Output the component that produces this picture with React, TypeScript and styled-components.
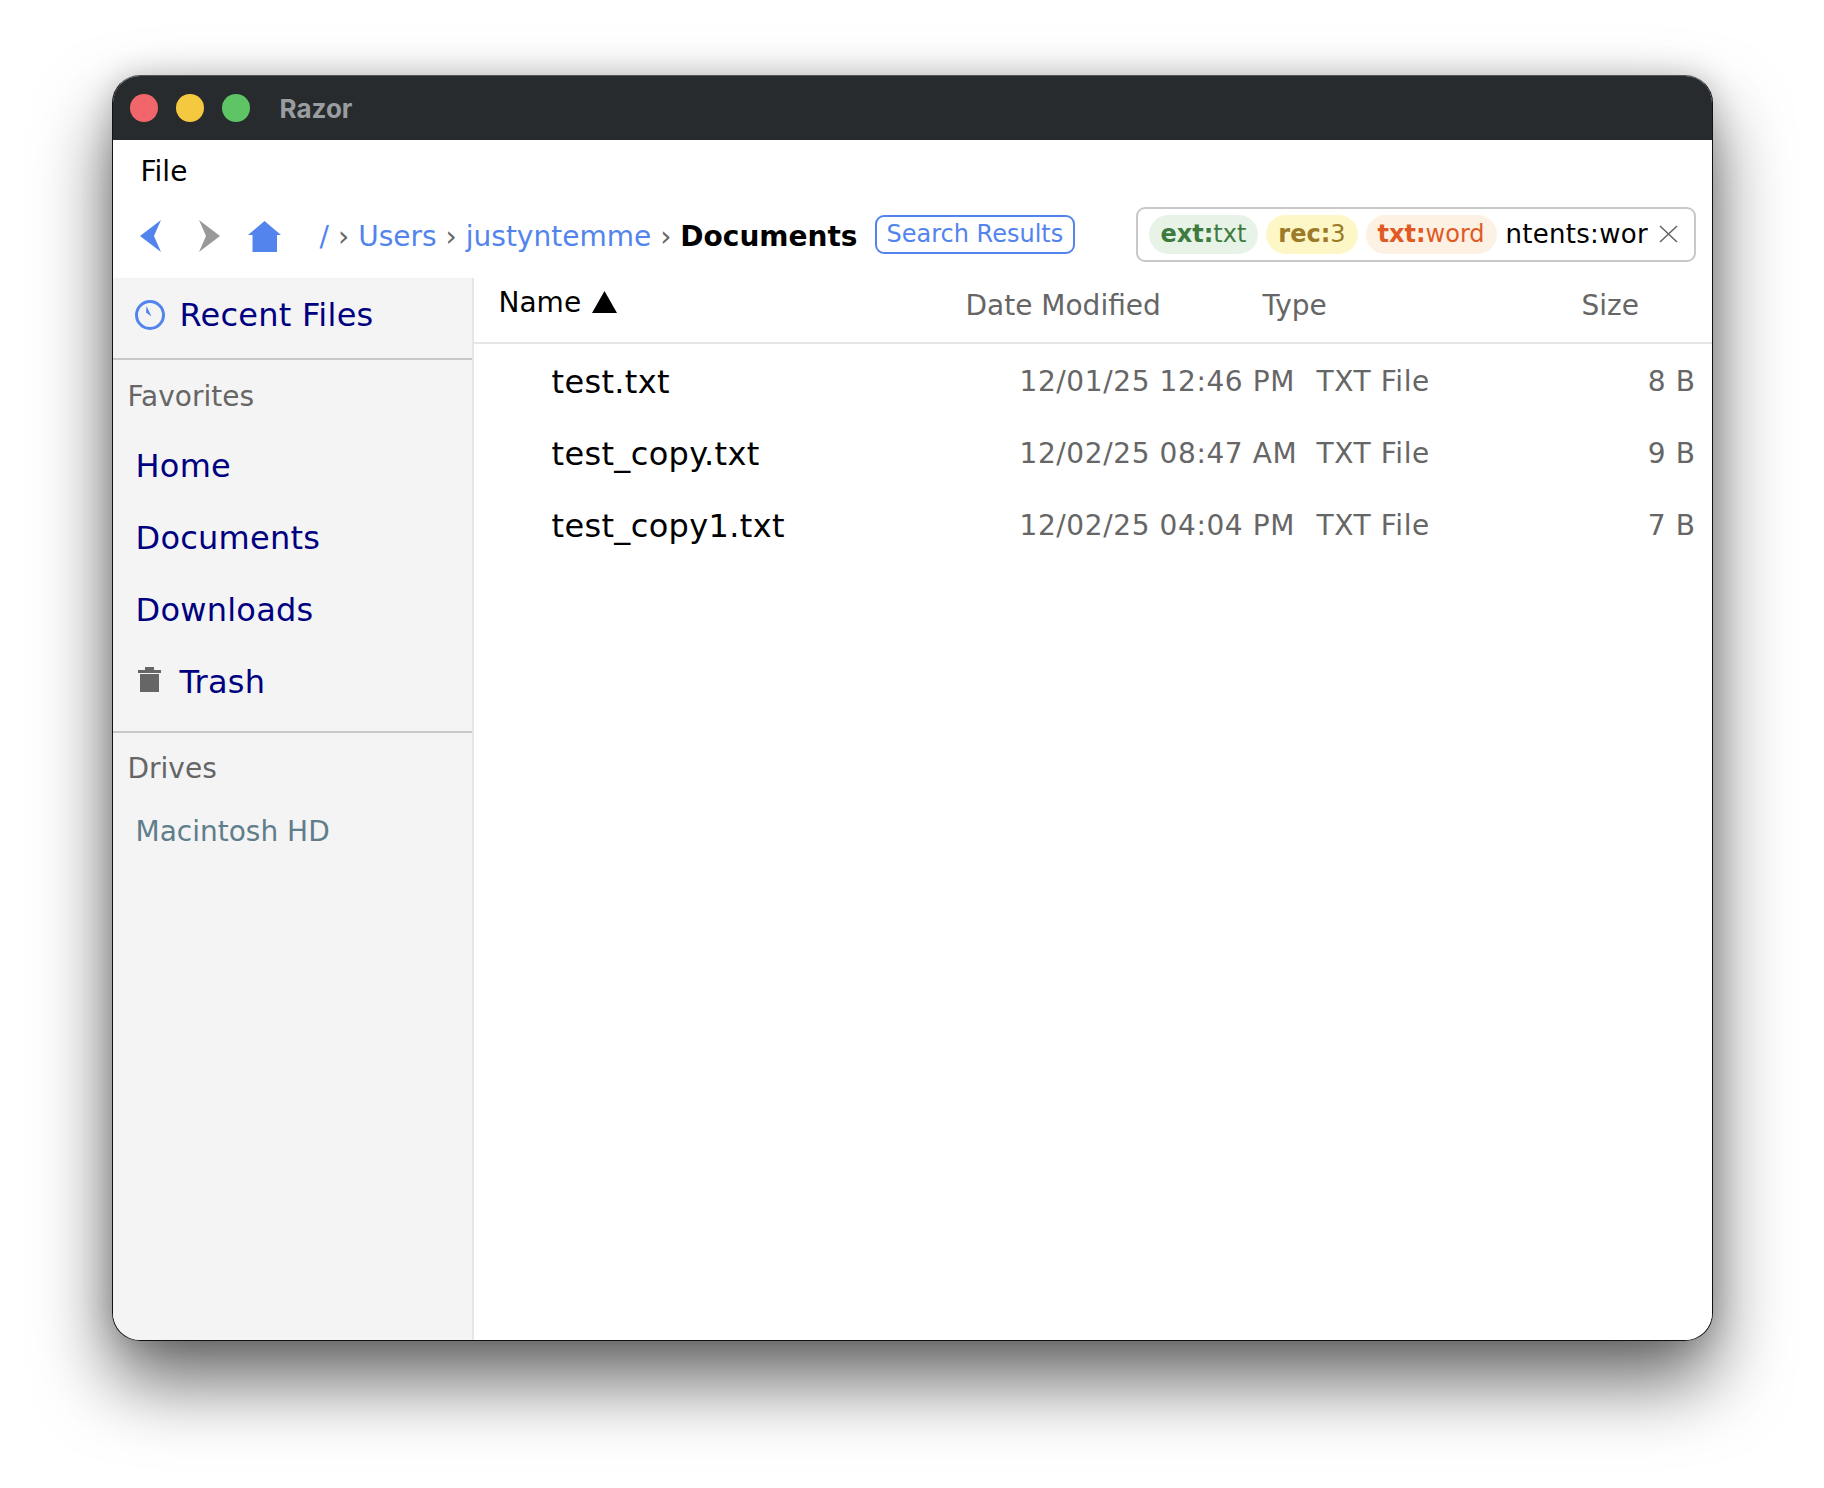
import React from 'react';
import styled, { createGlobalStyle } from 'styled-components';

const GlobalStyle = createGlobalStyle`
  html, body {
    margin: 0;
    padding: 0;
    background: #fff;
  }
  * {
    box-sizing: border-box;
  }
`;

const files = [
  { name: 'test.txt', date: '12/01/25 12:46 PM', type: 'TXT File', size: '8 B' },
  { name: 'test_copy.txt', date: '12/02/25 08:47 AM', type: 'TXT File', size: '9 B' },
  { name: 'test_copy1.txt', date: '12/02/25 04:04 PM', type: 'TXT File', size: '7 B' },
];

const App = () => {
  return (
    <Page>
      <GlobalStyle />
      <Window>
        <TitleBar>
          <Light color="#f1666a" />
          <Light color="#f4c93f" />
          <Light color="#5fc465" />
          <Title>Razor</Title>
        </TitleBar>

        <MenuBar>File</MenuBar>

        <Toolbar>
          <NavButtons>
            <svg width="21" height="32" viewBox="0 0 21 32">
              <path d="M21 0 L0 16 L21 32 L14 16 Z" fill="#5384ee" />
            </svg>
            <svg width="21" height="32" viewBox="0 0 21 32">
              <path d="M0 0 L21 16 L0 32 L7 16 Z" fill="#999" />
            </svg>
            <svg width="33" height="31" viewBox="0 0 33 31">
              <path d="M16.5 0 L33 14 L29 14 L29 31 L4.5 31 L4.5 14 L0 14 Z" fill="#5384ee" />
            </svg>
          </NavButtons>

          <Crumbs>
            <Crumb>/</Crumb>
            <Sep>›</Sep>
            <Crumb>Users</Crumb>
            <Sep>›</Sep>
            <Crumb>justyntemme</Crumb>
            <Sep>›</Sep>
            <CurrentCrumb>Documents</CurrentCrumb>
          </Crumbs>

          <ResultsTag>Search Results</ResultsTag>

          <SearchBox>
            <Chip bg="#e8f3e8" fg="#3f7b3f"><b>ext:</b>txt</Chip>
            <Chip bg="#fdf7c8" fg="#9c7a27"><b>rec:</b>3</Chip>
            <Chip bg="#fdf1e3" fg="#e05a26"><b>txt:</b>word</Chip>
            <SearchInput>
              <SearchText>contents:word</SearchText>
            </SearchInput>
            <ClearIcon width="19" height="18" viewBox="0 0 19 18">
              <path d="M1 1 L18 17 M18 1 L1 17" stroke="#666" strokeWidth="1.6" fill="none" />
            </ClearIcon>
          </SearchBox>
        </Toolbar>

        <Body>
          <Sidebar>
            <RecentSection>
              <svg width="30" height="30" viewBox="0 0 30 30">
                <circle cx="15" cy="15" r="13.5" stroke="#5384ee" strokeWidth="3" fill="none" />
                <path d="M11.5 6 L16.5 16.5 L11 12.5 Z" fill="#5384ee" />
              </svg>
              <RecentLabel>Recent Files</RecentLabel>
            </RecentSection>

            <Section>
              <SectionTitle>Favorites</SectionTitle>
              <FavItem>Home</FavItem>
              <FavItem>Documents</FavItem>
              <FavItem>Downloads</FavItem>
              <FavItem>
                <TrashIcon width="23" height="25" viewBox="0 0 23 25">
                  <path d="M7 0 H16 V3 H23 V6 H0 V3 H7 Z M2 7 H21 V25 H2 Z" fill="#666" />
                </TrashIcon>
                <TrashLabel>Trash</TrashLabel>
              </FavItem>
            </Section>

            <DriveSection>
              <SectionTitle>Drives</SectionTitle>
              <DriveItem>Macintosh HD</DriveItem>
            </DriveSection>
          </Sidebar>

          <Main>
            <HeaderRow>
              <NameHead>
                Name
                <svg width="25" height="22" viewBox="0 0 25 22">
                  <path d="M12.5 0 L25 22 L0 22 Z" fill="#000" />
                </svg>
              </NameHead>
              <DateHead>Date Modified</DateHead>
              <TypeHead>Type</TypeHead>
              <SizeHead>Size</SizeHead>
            </HeaderRow>
            {files.map((f) => (
              <FileRow key={f.name}>
                <FileName>{f.name}</FileName>
                <FileDate>{f.date}</FileDate>
                <FileType>{f.type}</FileType>
                <FileSize>{f.size}</FileSize>
              </FileRow>
            ))}
          </Main>
        </Body>
      </Window>
    </Page>
  );
};

export default App;

const Page = styled.div`
  width: 1824px;
  height: 1488px;
  padding: 75px 0 0 111.5px;
  overflow: hidden;
  font-family: 'DejaVu Sans', Verdana, sans-serif;
`;

const Window = styled.div`
  width: 1601px;
  height: 1266px;
  border-radius: 28px;
  background: #fff;
  border: 1.5px solid #111;
  border-top-color: #555;
  overflow: hidden;
  display: flex;
  flex-direction: column;
  box-shadow: 0 40px 75px rgba(0, 0, 0, 0.6), 0 0 30px rgba(0, 0, 0, 0.18);
`;

const TitleBar = styled.div`
  height: 64px;
  flex: none;
  background: #282b2e;
  display: flex;
  align-items: center;
  padding-left: 17px;
  gap: 18px;
`;

const Light = styled.div<{ color: string }>`
  width: 28px;
  height: 28px;
  border-radius: 50%;
  background: ${({ color }) => color};
`;

const Title = styled.div`
  margin-left: 12px;
  color: #9a9da0;
  font-family: Inter, 'Liberation Sans', sans-serif;
  font-size: 26px;
  font-weight: 700;
`;

const MenuBar = styled.div`
  height: 60px;
  flex: none;
  padding: 15px 0 0 28px;
  font-size: 28px;
  color: #000;
`;

const Toolbar = styled.div`
  height: 78px;
  flex: none;
  display: flex;
  align-items: center;
  padding: 0 16px 6px 27px;
`;

const NavButtons = styled.div`
  display: flex;
  align-items: center;
  gap: 38px;

  svg:last-child {
    margin-left: -10px;
  }
`;

const Crumbs = styled.div`
  margin-left: 39px;
  display: flex;
  align-items: center;
  gap: 9px;
  font-size: 28px;
`;

const Crumb = styled.span`
  color: #5384ee;
`;

const Sep = styled.span`
  color: #666;
  font-size: 28px;
`;

const CurrentCrumb = styled.span`
  color: #000;
  font-weight: 700;
`;

const ResultsTag = styled.div`
  margin: 0 0 4px 17px;
  height: 39px;
  padding: 0 10px;
  display: flex;
  align-items: center;
  border: 2px solid #5384ee;
  border-radius: 9px;
  color: #5384ee;
  font-size: 24px;
  white-space: nowrap;
`;

const SearchBox = styled.div`
  margin: 0 0 4px auto;
  width: 560px;
  height: 55px;
  display: flex;
  align-items: center;
  gap: 8px;
  padding: 0 16px 0 11px;
  background: #fff;
  border: 2px solid #c8c8c8;
  border-radius: 9px;
`;

const Chip = styled.span<{ bg: string; fg: string }>`
  height: 39px;
  padding: 0 12px;
  display: flex;
  align-items: center;
  border-radius: 20px;
  background: ${({ bg }) => bg};
  color: ${({ fg }) => fg};
  font-size: 24px;
  white-space: nowrap;

  b {
    font-weight: 700;
  }
`;

const SearchInput = styled.div`
  flex: 1;
  min-width: 0;
  overflow: hidden;
  margin-right: 3px;
`;

const SearchText = styled.div`
  margin-left: -30px;
  font-size: 26px;
  letter-spacing: 0.3px;
  color: #000;
  white-space: nowrap;
`;

const ClearIcon = styled.svg`
  flex: none;
`;

const Body = styled.div`
  flex: 1;
  min-height: 0;
  display: flex;
`;

const Sidebar = styled.div`
  width: 361px;
  flex: none;
  background: #f4f4f4;
  border-right: 2px solid #e6e6e6;
`;

const RecentSection = styled.div`
  height: 82px;
  display: flex;
  align-items: center;
  padding: 0 0 6px 22px;
  gap: 15px;
  border-bottom: 2px solid #c8c8c8;
`;

const RecentLabel = styled.span`
  color: #000080;
  font-size: 32px;
  letter-spacing: 0.25px;
`;

const Section = styled.div`
  height: 373px;
  padding: 16px 0 0 15px;
  border-bottom: 2px solid #c8c8c8;
`;

const DriveSection = styled.div`
  padding: 15px 0 0 15px;
`;

const SectionTitle = styled.div`
  height: 42px;
  margin-bottom: 11.5px;
  color: #666;
  font-size: 28px;
  line-height: 42px;
`;

const FavItem = styled.div`
  height: 72px;
  display: flex;
  align-items: center;
  padding-left: 8px;
  color: #000080;
  font-size: 32px;
  letter-spacing: 0.25px;
`;

const TrashIcon = styled.svg`
  margin: 0 0 4px 2px;
`;

const TrashLabel = styled.span`
  margin-left: 19px;
`;

const DriveItem = styled.div`
  height: 60px;
  display: flex;
  align-items: center;
  padding-left: 8px;
  color: #607d8b;
  font-size: 28px;
`;

const Main = styled.div`
  flex: 1;
  min-width: 0;
  background: #fff;
`;

const HeaderRow = styled.div`
  display: grid;
  grid-template-columns: 467px 297px 319px 1fr;
  align-items: center;
  height: 66px;
  margin-bottom: 1.5px;
  padding: 0 16px 0 25px;
  border-bottom: 2px solid #e6e6e6;
`;

const NameHead = styled.div`
  display: flex;
  align-items: center;
  gap: 11px;
  color: #000;
  font-size: 28px;
  padding-bottom: 16px;
`;

const DateHead = styled.div`
  color: #666;
  font-size: 28px;
  padding-bottom: 10px;
`;

const TypeHead = styled(DateHead)``;

const SizeHead = styled(DateHead)``;

const FileRow = styled.div`
  display: grid;
  grid-template-columns: 468px 297px 1fr auto;
  align-items: center;
  height: 72px;
  padding: 0 16px 0 78px;
`;

const FileName = styled.div`
  color: #000;
  font-size: 32px;
  letter-spacing: 0.35px;
`;

const FileDate = styled.div`
  color: #666;
  font-size: 28px;
  letter-spacing: 0.6px;
  white-space: nowrap;
`;

const FileType = styled(FileDate)``;

const FileSize = styled(FileDate)`
  text-align: right;
`;
